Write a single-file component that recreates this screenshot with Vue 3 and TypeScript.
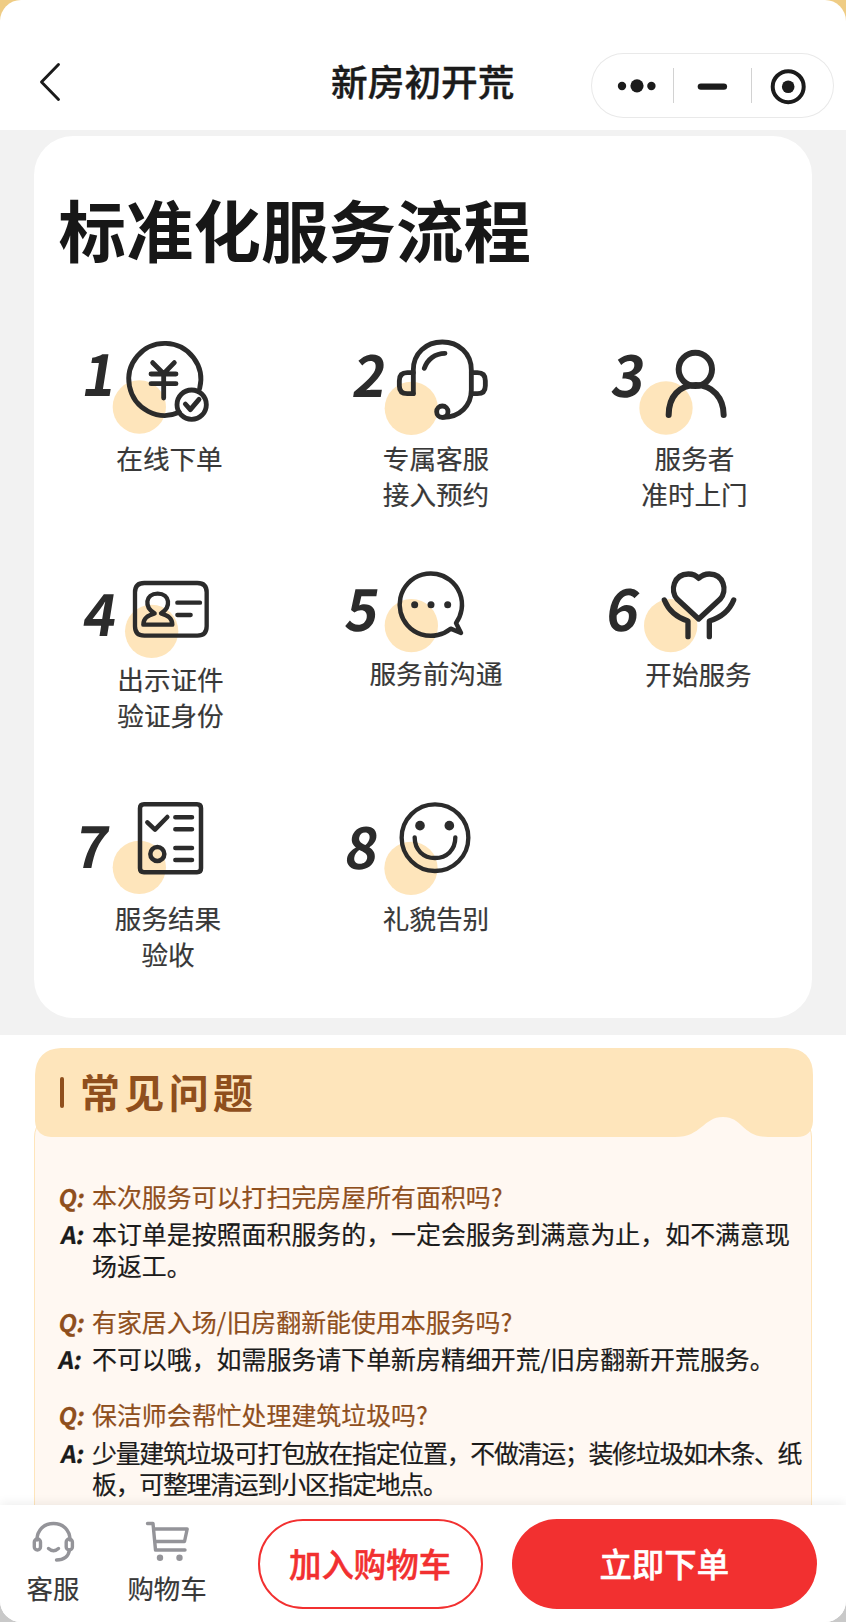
<script setup lang="ts">
interface Dot { cx: number; cy: number; r: number }
interface Step {
  num: number
  numX: number
  numY: number
  artHeight: number
  blobX: number
  blobY: number
  stroke: number
  paths: string[]
  dots?: Dot[]
  lines: string[]
}

/* Artwork uses three units per CSS pixel. */
const steps: Step[] = [
  {
    num: 1, numX: 61, numY: 229, artHeight: 120, blobX: 238, blobY: 261, stroke: 14.5,
    paths: [
      'M358 277 A108 108 0 1 1 419 205',
      'M278 128 L311 161 L343 128 M273 162 H348 M273 191 H348 M311 161 V234',
      'M439 254 A44 44 0 1 1 351 254 A44 44 0 1 1 439 254',
      'M376 252 L391 269 L417 238',
    ],
    lines: ['在线下单'],
  },
  {
    num: 2, numX: 62, numY: 231, artHeight: 120, blobX: 244, blobY: 265, stroke: 14.5,
    paths: [
      'M250 221 V150 C250 100 288 66 337 66 C386 66 424 100 424 150 V210 C424 256 390 292 338 292',
      'M250 158 H232 Q208 158 208 182 V197 Q208 221 232 221 H250',
      'M424 158 H442 Q466 158 466 182 V197 Q466 221 442 221 H424',
      'M283 145 C292 118 315 100 345 100',
      'M354 275 A17 17 0 1 1 320 275 A17 17 0 1 1 354 275',
    ],
    lines: ['专属客服', '接入预约'],
  },
  {
    num: 3, numX: 58, numY: 230, artHeight: 120, blobX: 228, blobY: 264, stroke: 18,
    paths: [
      'M366 148 A50 50 0 1 1 266 148 A50 50 0 1 1 366 148',
      'M236 285 C236 230 268 195 318 195 S401 235 401 285',
    ],
    lines: ['服务者', '准时上门'],
  },
  {
    num: 4, numX: 62, numY: 257, artHeight: 111, blobX: 275, blobY: 244, stroke: 13,
    paths: [
      'M253 99 H412 Q440 99 440 127 V229 Q440 257 412 257 H253 Q225 257 225 229 V127 Q225 99 253 99 Z',
      'M284 190 C252 172 255 131 293 131 C331 131 334 172 303 190 C325 197 337 205 337 224 H250 C250 205 262 197 284 190 Z',
      'M352 158 H420 M352 195 H392',
    ],
    lines: ['出示证件', '验证身份'],
  },
  {
    num: 5, numX: 39, numY: 242, artHeight: 105, blobX: 244, blobY: 227, stroke: 13.5,
    paths: ['M378 219 A93.5 93.5 0 1 0 362 236 L393 249 Z'],
    dots: [{ cx: 254, cy: 164, r: 10.5 }, { cx: 303, cy: 164, r: 10.5 }, { cx: 353, cy: 164, r: 10.5 }],
    lines: ['服务前沟通'],
  },
  {
    num: 6, numX: 41, numY: 242, artHeight: 106, blobX: 242, blobY: 227, stroke: 16,
    paths: [
      'M326 207 L262 148 C238 122 252 72 295 72 C310 72 320 78 326 85 C333 78 343 72 358 72 C401 72 414 122 390 148 Z',
      'M223 150 C237 185 262 203 294 213 V260',
      'M431 150 C417 185 392 203 358 213 V260',
    ],
    lines: ['开始服务'],
  },
  {
    num: 7, numX: 38, numY: 264, artHeight: 120, blobX: 238, blobY: 262, stroke: 13.5,
    paths: [
      'M252 73 H411 Q423 73 423 85 V265 Q423 277 411 277 H252 Q240 277 240 265 V85 Q240 73 252 73 Z',
      'M262 127 L285 149 L322 111',
      'M346 112 H396 M346 148 H396 M346 204 H396 M346 240 H396',
      'M313 222 A21 21 0 1 1 271 222 A21 21 0 1 1 313 222',
    ],
    lines: ['服务结果', '验收'],
  },
  {
    num: 8, numX: 38, numY: 266, artHeight: 120, blobX: 243, blobY: 265, stroke: 13,
    paths: [
      'M415 173 A100 100 0 1 1 215 173 A100 100 0 1 1 415 173',
      'M254 172 C254 210 280 234 315 234 S376 210 376 172',
    ],
    dots: [{ cx: 270, cy: 137, r: 14.5 }, { cx: 358, cy: 137, r: 14.5 }],
    lines: ['礼貌告别'],
  },
]

interface Faq { q: string; a: string[]; tight?: boolean }
const faqs: Faq[] = [
  { q: '本次服务可以打扫完房屋所有面积吗?', a: ['本订单是按照面积服务的，一定会服务到满意为止，如不满意现', '场返工。'] },
  { q: '有家居入场/旧房翻新能使用本服务吗?', a: ['不可以哦，如需服务请下单新房精细开荒/旧房翻新开荒服务。'] },
  { q: '保洁师会帮忙处理建筑垃圾吗?', a: ['少量建筑垃圾可打包放在指定位置，不做清运；装修垃圾如木条、纸', '板，可整理清运到小区指定地点。'], tight: true },
]
</script>

<template>
  <div class="backdrop">
    <div class="phone">
      <header class="nav">
        <svg class="back" viewBox="0 0 24 40" width="24" height="40">
          <path d="M20.5 2.5 L3.5 20 L20.5 37.5" />
        </svg>
        <h1 class="nav-title">新房初开荒</h1>
        <div class="capsule">
          <svg viewBox="0 0 243 65" width="243" height="65">
            <circle cx="31" cy="33" r="4.2" />
            <circle cx="46" cy="32.8" r="6.6" />
            <circle cx="60.4" cy="33" r="4.2" />
            <rect x="82" y="15" width="1" height="35" class="sep" />
            <rect x="106.7" y="30.4" width="29.4" height="6.4" rx="3.2" />
            <rect x="160" y="15" width="1" height="35" class="sep" />
            <circle cx="197.2" cy="33.7" r="15.5" class="ring" />
            <circle cx="197.2" cy="33.7" r="6.3" />
          </svg>
        </div>
      </header>

      <main class="content">
        <section class="process">
          <div class="card">
            <h2 class="card-title">标准化服务流程</h2>
            <div class="steps">
              <div v-for="s in steps" :key="s.num" class="step" :class="`step-${s.num}`">
                <svg class="art" width="200" :height="s.artHeight" :viewBox="`0 0 600 ${s.artHeight * 3}`">
                  <circle class="blob" :cx="s.blobX" :cy="s.blobY" r="80" />
                  <text class="num" :transform="`translate(${s.numX} ${s.numY}) skewX(-9) scale(0.96 1)`">{{ s.num }}</text>
                  <path v-for="(d, i) in s.paths" :key="i" class="line" :d="d" :stroke-width="s.stroke" />
                  <circle v-for="(c, i) in s.dots" :key="i" class="dot" :cx="c.cx" :cy="c.cy" :r="c.r" />
                </svg>
                <p class="label"><span v-for="l in s.lines" :key="l">{{ l }}</span></p>
              </div>
            </div>
          </div>
        </section>

        <section class="faq">
          <div class="faq-head">
            <svg class="faq-shape" viewBox="0 0 778 89" width="778" height="89">
              <path d="M26 0 H752 Q778 1 778 27 V73 Q777 89 762 89 H733 C707 89 708 69 688 69 C668 69 667 89 640 89 H16 Q1 88 0 73 V27 Q1 1 26 0 Z" />
            </svg>
            <i class="tick"></i>
            <h2 class="faq-title">常见问题</h2>
          </div>
          <div class="faq-body">
            <article v-for="f in faqs" :key="f.q" class="qa">
              <div class="row question"><b class="tag">Q:</b><p>{{ f.q }}</p></div>
              <div class="row answer" :class="{ tight: f.tight }">
                <b class="tag">A:</b>
                <p><span v-for="l in f.a" :key="l">{{ l }}</span></p>
              </div>
            </article>
          </div>
        </section>
      </main>

      <footer class="bar">
        <div class="shortcut service">
          <svg viewBox="0 0 44 42" width="44" height="42">
            <path d="M6 19 C6 9 13 2.5 22.5 2.5 S39 9 39 19" />
            <rect x="3.3" y="18" width="6.2" height="11" rx="3.1" />
            <rect x="35.2" y="18" width="6.2" height="11" rx="3.1" />
            <path d="M17.5 27.5 Q22.5 32 27.5 27.5" />
            <path d="M38.5 29 C37.5 35 33.5 39 25.5 39" />
          </svg>
          <span>客服</span>
        </div>
        <div class="shortcut cart">
          <svg viewBox="0 0 44 42" width="44" height="42">
            <path d="M2.5 2.5 H8 L10.5 29 H40 M9.3 8 H42.2 L39.5 20.5 H10.5" />
            <circle cx="15" cy="36.8" r="3.2" />
            <circle cx="34.5" cy="36.8" r="3.2" />
          </svg>
          <span>购物车</span>
        </div>
        <button class="btn outline">加入购物车</button>
        <button class="btn solid">立即下单</button>
      </footer>
    </div>
  </div>
</template>

<style>
body {
  margin: 0;
}
</style>

<style scoped>
.backdrop {
  width: 846px;
  height: 1622px;
  background: linear-gradient(#efcc84 0, #efcc84 50%, #c9c9c9 50%);
  font-family: "Noto Sans CJK SC", sans-serif;
  color: #1b1b1b;
}
.phone {
  display: flex;
  flex-direction: column;
  height: 1622px;
  border-radius: 21px;
  overflow: hidden;
  background: #fff;
}
h1, h2, p {
  margin: 0;
}

.nav {
  display: grid;
  grid-template-columns: 331px 183px 1fr;
  flex: none;
  height: 130px;
  box-sizing: border-box;
  padding-top: 53px;
  align-items: start;
}
.back {
  margin: 8.5px 0 0 38px;
  fill: none;
  stroke: #1b1b1b;
  stroke-width: 2.9;
  stroke-linecap: round;
  stroke-linejoin: round;
}
.nav-title {
  font-size: 36.7px;
  font-weight: 500;
  line-height: 54px;
  white-space: nowrap;
  -webkit-text-stroke: 0.4px;
}
.capsule {
  justify-self: end;
  margin-right: 12px;
  width: 243px;
  height: 65px;
  border-radius: 33px;
  box-shadow: inset 0 0 0 1px #e9e9e9;
  fill: #1b1b1b;
}
.capsule svg {
  display: block;
}
.capsule .sep {
  fill: #d2d2d2;
}
.capsule .ring {
  fill: none;
  stroke: #1b1b1b;
  stroke-width: 4;
}

.content {
  flex: 1;
  min-height: 0;
  overflow: hidden;
}
.process {
  background: #f2f2f2;
  padding: 6px 34px 17px;
}
.card {
  box-sizing: border-box;
  height: 882px;
  padding: 58px 0 0 26px;
  border-radius: 39px;
  background: #fff;
}
.card-title {
  margin-left: -1.5px;
  font-size: 67.5px;
  line-height: 68px;
  font-weight: 700;
  color: #171717;
}
.steps {
  display: grid;
  grid-template-columns: 270px 260px 200px;
  grid-auto-rows: 230px;
  margin-top: 58px;
}
.art {
  display: block;
}
.blob {
  fill: #fee5bb;
}
.num {
  font-size: 174px;
  font-weight: 700;
  fill: #2b2b2b;
}
.line {
  fill: none;
  stroke: #2b2b2b;
  stroke-linecap: round;
  stroke-linejoin: round;
}
.dot {
  fill: #2b2b2b;
}
.label {
  width: 212px;
  font-size: 26.6px;
  line-height: 36px;
  color: #383838;
  text-align: center;
  -webkit-text-stroke: 0.2px;
}
.label span,
.answer span {
  display: block;
  white-space: nowrap;
}
.step-1 .label { width: 219px; }
.step-3 .label { width: 209px; }
.step-4 .label { width: 221px; }
.step-6 .label { width: 217px; }
.step-7 .label { width: 216px; }

.faq {
  padding: 13px 34px 0;
}
.faq-head {
  position: relative;
  display: flex;
  align-items: center;
  width: 778px;
  height: 89px;
  margin-left: 1px;
  z-index: 1;
}
.faq-shape {
  position: absolute;
  inset: 0;
  z-index: -1;
  fill: #fee5bb;
}
.tick {
  width: 4.4px;
  height: 31px;
  margin-left: 25px;
  border-radius: 2.2px;
  background: #8f4f1d;
}
.faq-title {
  margin: 0 0 4px 15.5px;
  font-size: 40px;
  line-height: 56px;
  font-weight: 700;
  letter-spacing: 4.4px;
  color: #8f4f1d;
}
.faq-body {
  box-sizing: border-box;
  width: 778px;
  height: 600px;
  margin-top: -24px;
  padding: 67px 0 0 24px;
  border: 1px solid #fee5bb;
  border-radius: 24px 24px 0 0;
  background: #fff8f2;
}
.qa {
  margin-bottom: 24.2px;
  font-size: 24.93px;
  -webkit-text-stroke: 0.2px;
}
.row {
  display: flex;
  line-height: 31.7px;
}
.tag {
  flex: none;
  width: 27px;
  margin-right: 6px;
  font-size: 24px;
  font-weight: 700;
  transform: skewX(-9deg);
}
.question {
  margin-bottom: 5.7px;
  color: #8f4f1d;
}
.tight p {
  letter-spacing: -1.28px;
}

.bar {
  display: flex;
  flex: none;
  align-items: flex-start;
  box-sizing: border-box;
  height: 117px;
  background: #fff;
  box-shadow: 0 -2px 10px rgba(0, 0, 0, 0.07);
  z-index: 2;
}
.shortcut {
  display: flex;
  flex-direction: column;
  align-items: center;
  padding-top: 16px;
  font-size: 26.4px;
  line-height: 36px;
  color: #383838;
  -webkit-text-stroke: 0.2px;
}
.shortcut svg {
  fill: none;
  stroke: #949499;
  stroke-width: 3.4;
  stroke-linecap: round;
  stroke-linejoin: round;
}
.shortcut span {
  margin-top: 7px;
}
.service {
  width: 106px;
}
.cart {
  width: 122px;
}
.cart circle {
  fill: #949499;
  stroke: none;
}
.btn {
  box-sizing: border-box;
  height: 90px;
  margin: 14px 0 0;
  padding: 0 0 3px;
  border-radius: 45px;
  font: 500 32.4px/48px "Noto Sans CJK SC", sans-serif;
  -webkit-text-stroke: 0.5px;
}
.outline {
  width: 225px;
  margin-left: 29.5px;
  border: 2px solid #f23030;
  background: #fff;
  color: #f23030;
}
.solid {
  width: 304.5px;
  margin-left: 29.5px;
  border: 0;
  background: #f23030;
  color: #fff;
}
</style>
